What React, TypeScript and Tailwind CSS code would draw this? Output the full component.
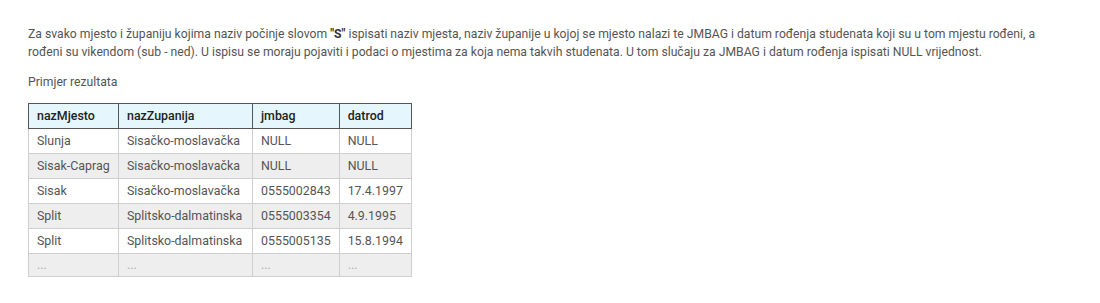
const rows = [
  ['Slunja', 'Sisačko-moslavačka', 'NULL', 'NULL'],
  ['Sisak-Caprag', 'Sisačko-moslavačka', 'NULL', 'NULL'],
  ['Sisak', 'Sisačko-moslavačka', '0555002843', '17.4.1997'],
  ['Split', 'Splitsko-dalmatinska', '0555003354', '4.9.1995'],
  ['Split', 'Splitsko-dalmatinska', '0555005135', '15.8.1994'],
]

const cols = ['nazMjesto', 'nazZupanija', 'jmbag', 'datrod']
const widths = ['w-[90px]', 'w-[134px]', 'w-[86px]', 'w-[72px]']

export default function App() {
  return (
    <div className="min-h-[303px] bg-white px-[28px] pt-[25px] text-[12.2px] leading-[18px] text-[#555] [font-family:Roboto,'Liberation_Sans',sans-serif]">
      <p className="w-[1025px]">
        Za svako mjesto i županiju kojima naziv počinje slovom <b className="font-bold text-[#333]">"S"</b> ispisati naziv mjesta, naziv županije u kojoj se mjesto nalazi te JMBAG i datum rođenja studenata koji su u tom mjestu rođeni, a rođeni su vikendom (sub - ned). U ispisu se moraju pojaviti i podaci o mjestima za koja nema takvih studenata. U tom slučaju za JMBAG i datum rođenja ispisati NULL vrijednost.
      </p>
      <p className="mt-[12px]">Primjer rezultata</p>
      <table className="mt-[12px] table-fixed border-collapse text-[12.4px]">
        <thead>
          <tr className="bg-[#e5f7fc]">
            {cols.map((c, i) => (
              <th key={c} className={`${widths[i]} h-[25px] border border-[#555] px-[8px] text-left font-medium text-[#222]`}>
                {c}
              </th>
            ))}
          </tr>
        </thead>
        <tbody>
          {rows.map((r, i) => (
            <tr key={i} className={i % 2 === 1 ? 'bg-[#eeeeee]' : 'bg-white'}>
              {r.map((v, j) => (
                <td key={j} className="h-[25px] whitespace-nowrap border border-[#cfcfcf] px-[8px]">
                  {v}
                </td>
              ))}
            </tr>
          ))}
          <tr className="bg-[#eeeeee]">
            {cols.map((c) => (
              <td key={c} className="h-[23px] border border-[#cfcfcf] px-[8px] text-[#aaa]">
                ...
              </td>
            ))}
          </tr>
        </tbody>
      </table>
    </div>
  )
}
